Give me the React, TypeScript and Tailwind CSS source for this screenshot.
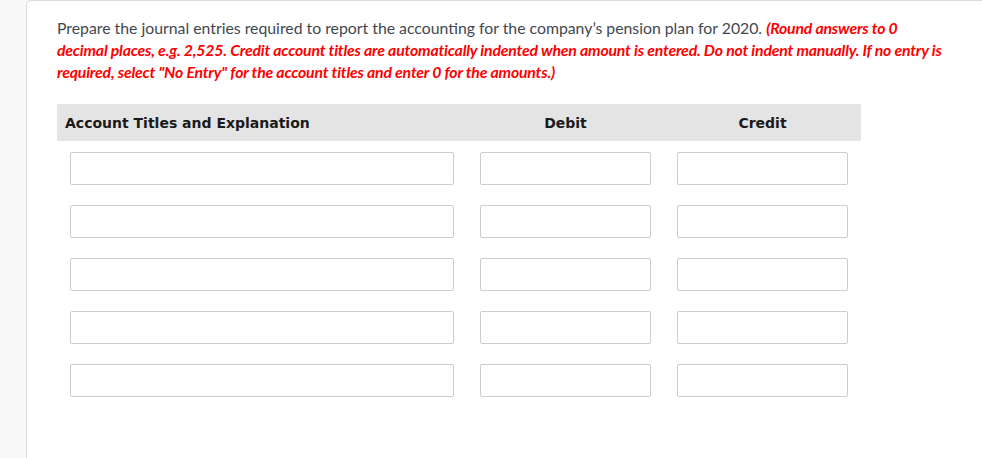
import React from "react";

const rows = [0, 1, 2, 3, 4];

export default function App() {
  return (
    <div className="flex min-h-[458px] w-[982px] bg-[#f9f9f9]">
      <div className="w-[26px] shrink-0" />
      <div className="flex-1 rounded-tl-[5px] border-l border-t border-[#dcdcdc] bg-white pl-[30px] pr-[20px] pt-[16px]">
        <p
          className="text-[15.8px] leading-[22px] text-[#3f4850]"
          style={{ fontFamily: "Lato, 'Open Sans', sans-serif" }}
        >
          Prepare the journal entries required to report the accounting for the company’s pension plan for 2020.{" "}
          <span className="font-bold italic tracking-[-0.18px] text-[#ff0000]">
            (Round answers to 0
            <br />
            decimal places, e.g. 2,525. Credit account titles are automatically indented when amount is entered. Do not indent manually. If no entry is
            <br />
            required, select "No Entry" for the account titles and enter 0 for the amounts.)
          </span>
        </p>
        <div className="mt-[21px] w-[804px]">
          <div
            className="grid h-[37px] grid-cols-[410px_197px_197px] items-center bg-[#e4e4e4] text-[14px] font-bold text-[#1a1a1a]"
            style={{ fontFamily: "'DejaVu Sans', Verdana, sans-serif" }}
          >
            <div className="pl-[8px] pt-[1px]">Account Titles and Explanation</div>
            <div className="pt-[1px] text-center">Debit</div>
            <div className="pt-[1px] text-center">Credit</div>
          </div>
          <div className="mt-[11px] flex flex-col gap-[20px]">
            {rows.map((r) => (
              <div key={r} className="grid grid-cols-[410px_197px_197px]">
                <div className="px-[13px]">
                  <div className="h-[33px] rounded-[2px] border border-[#cccccc] bg-white" />
                </div>
                <div className="px-[13px]">
                  <div className="h-[33px] rounded-[2px] border border-[#cccccc] bg-white" />
                </div>
                <div className="px-[13px]">
                  <div className="h-[33px] rounded-[2px] border border-[#cccccc] bg-white" />
                </div>
              </div>
            ))}
          </div>
        </div>
      </div>
    </div>
  );
}
